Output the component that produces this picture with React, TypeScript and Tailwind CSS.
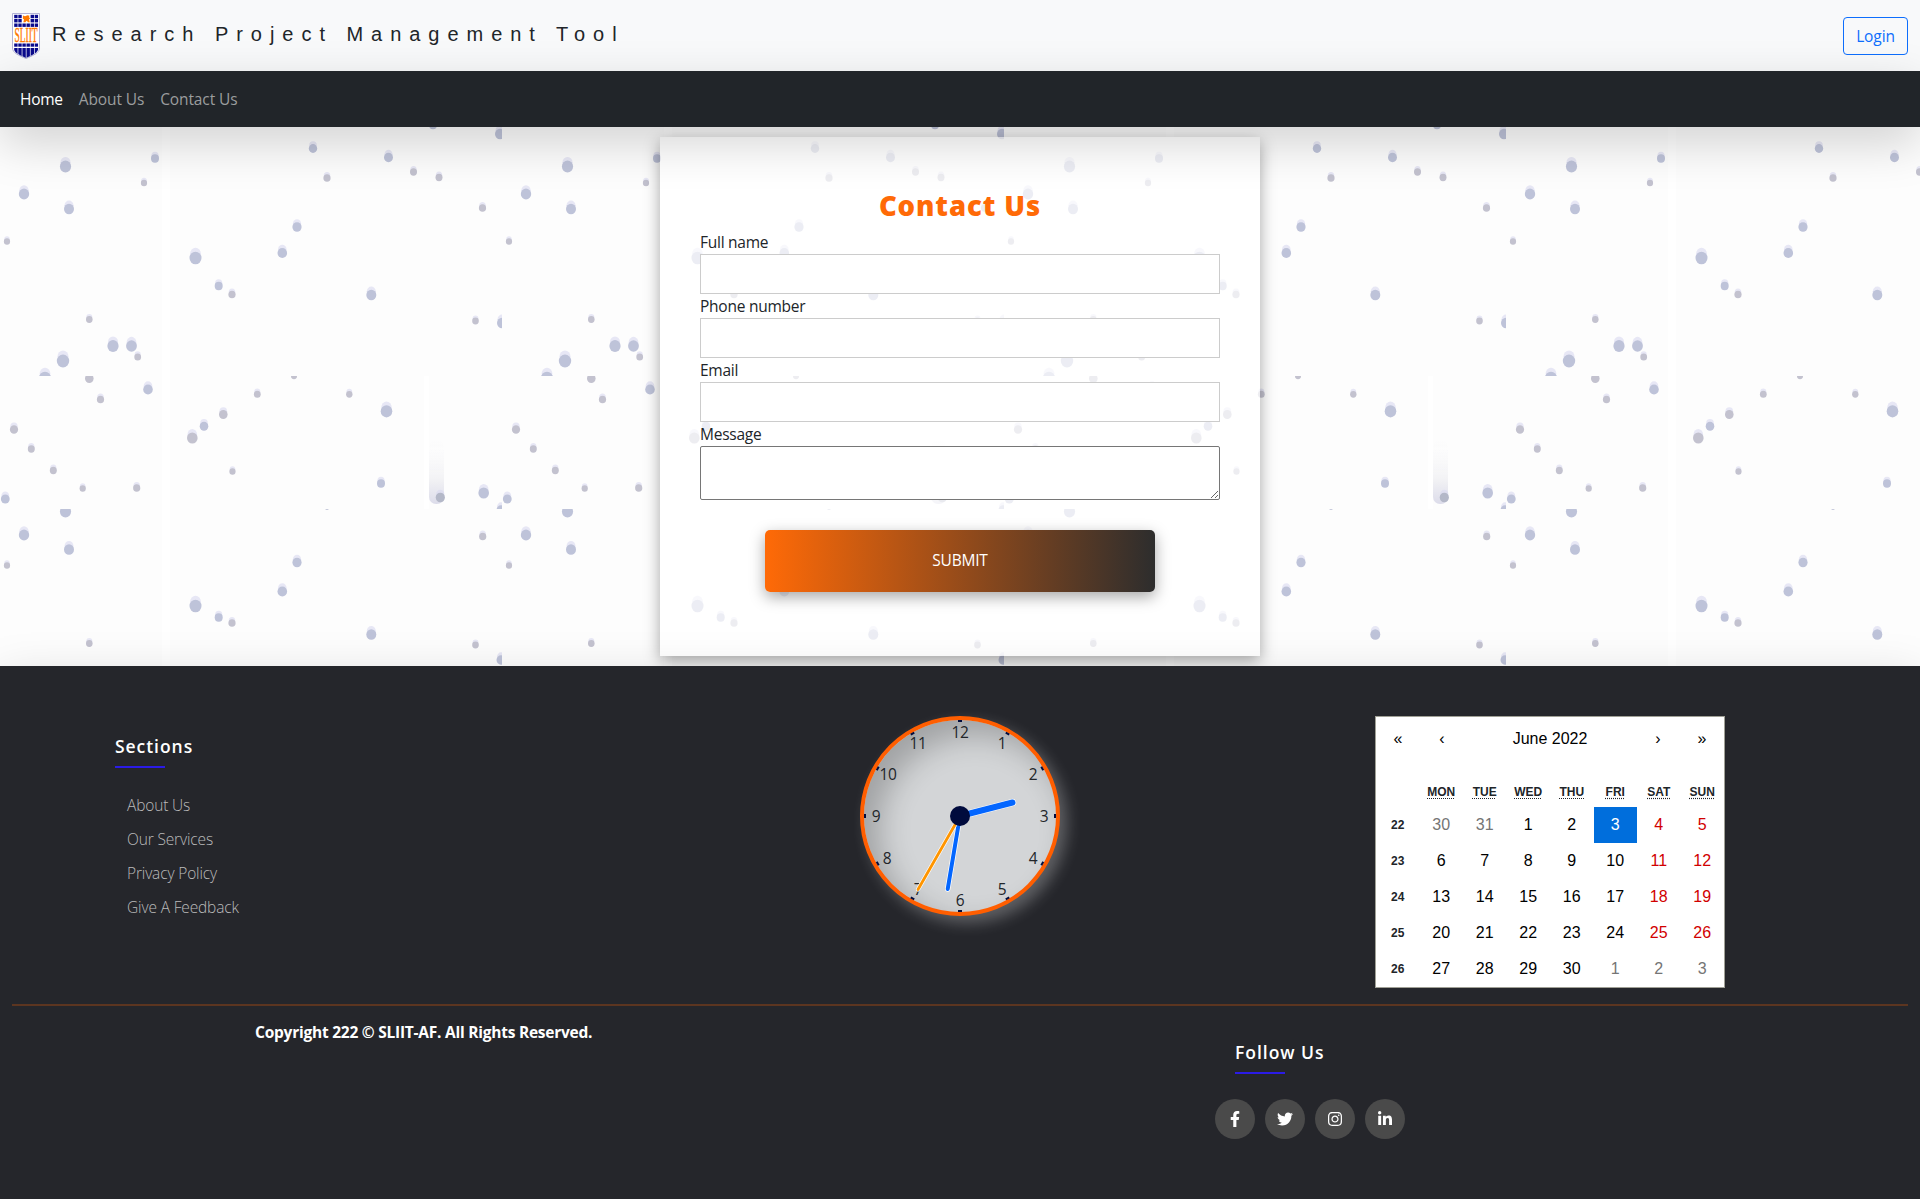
import React from "react";
import { FaFacebookF, FaTwitter, FaInstagram, FaLinkedinIn } from "react-icons/fa";

/* Droplets of one wallpaper tile: x, y, radius, tint. Coordinates are relative to the strip. */
type Drop = [number, number, number, string];
const B = "#bec3d9";
const G = "#c3c2cf";

const rowA: Drop[] = [
  [65.5, 39.5, 5.6, B], [155, 31.5, 4, B], [144, 56, 3.1, G], [24, 67, 5.2, B], [69, 82, 5, B],
  [7, 114.5, 3.1, G], [313, 21.5, 4.2, B], [327, 51, 3.6, G], [388.5, 30.5, 4.5, B], [413.5, 45, 3.5, G],
  [439, 50.5, 3.5, G], [482.5, 81, 3.6, G], [500, 7, 5, B], [433, -2, 4, B], [297, 100, 4.6, B],
  [282.3, 126, 4.8, B], [195.5, 131, 6, B], [218.7, 159, 4, B], [232, 167.5, 3.6, G], [371.3, 168, 5, B],
  [89.3, 192.5, 3.3, G], [113, 219, 5.6, B], [131.5, 219, 5.4, B], [137.7, 230, 3.4, G], [63, 234, 6.2, B],
  [45, 251, 6, B], [475.5, 194, 3.3, G], [502, 196, 5, B],
];
const rowB: Drop[] = [
  [89.3, 2.5, 4.3, G], [100.5, 23.5, 3.6, G], [148, 13.5, 4.8, B], [257.3, 18.3, 3.4, G], [294, 0, 3, G],
  [349.3, 18.3, 3.2, G], [223.3, 38.5, 4.3, G], [204, 50.3, 4.3, B], [192.3, 62, 5.3, G], [386.5, 35.3, 5.8, B],
  [14, 53.5, 4.1, G], [31.3, 73, 3.5, G], [53.3, 94.5, 3.5, G], [82.7, 112.5, 3.1, G], [136.7, 112, 3.6, G],
  [232.5, 95.5, 3.1, G], [381, 107.5, 4, B], [5.3, 123, 4.4, B], [483.7, 117, 5.3, B], [501, 134, 4.5, B],
  [440.3, 121.5, 4.6, "#b4b8c8"],
];
const rowC: Drop[] = [
  [65.5, 2.5, 5.6, B], [24, 26, 5.2, B], [69, 40.5, 5, B], [7, 56.5, 3.1, G], [297, 53.5, 4.6, B],
  [282.3, 82.5, 4.8, B], [195.5, 97, 6, B], [218.7, 108.5, 4, B], [232, 114, 3.6, G], [371.3, 125.5, 5, B],
  [482.7, 27.5, 3.6, G], [475.5, 136, 3.3, G], [89.3, 134.5, 3.3, G], [501, 151, 4.5, B], [327, -1, 2, B],
];

function Strip({ y, h, drops, trail }: { y: number; h: number; drops: Drop[]; trail?: boolean }) {
  return (
    <svg x="0" y={y} width="502" height={h} overflow="hidden">
      <rect x="162" width="8" height={h} fill="#fff" />
      {trail && <rect x="424" width="5" height={h} fill="#fff" />}
      {trail && <rect x="429" y="64" width="15" height="64" rx="7" fill="url(#trail)" filter="url(#soft)" />}
      {drops.map(([cx, cy, r, c], i) => (
        <g key={i} filter="url(#soft)">
          <ellipse cx={cx} cy={cy - r * 0.7} rx={r * 0.9} ry={r} fill="#d9d9f0" opacity="0.6" />
          <ellipse cx={cx} cy={cy} rx={r} ry={r * 1.05} fill={c} />
        </g>
      ))}
    </svg>
  );
}

function Wallpaper() {
  return (
    <svg className="absolute inset-0 h-full w-full" aria-hidden="true">
      <defs>
        <filter id="soft" x="-30%" y="-30%" width="160%" height="160%">
          <feGaussianBlur stdDeviation="0.6" />
        </filter>
        <linearGradient id="trail" x1="0" y1="0" x2="0" y2="1">
          <stop offset="0" stopColor="#f9f9fb" stopOpacity="0" />
          <stop offset="0.6" stopColor="#f3f3f5" />
          <stop offset="1" stopColor="#dcdcea" />
        </linearGradient>
        <pattern id="drops" width="502" height="539" patternUnits="userSpaceOnUse">
          <rect width="502" height="539" fill="#fdfdfd" />
          <Strip y={0} h={249} drops={rowA} />
          <Strip y={249} h={133} drops={rowB} trail />
          <Strip y={382} h={157} drops={rowC} />
        </pattern>
      </defs>
      <rect width="100%" height="100%" fill="url(#drops)" />
    </svg>
  );
}

function Crest() {
  const xs = [2.2, 6.3, 10.4, 14.5, 18.6, 22.7];
  return (
    <svg width="28" height="46" viewBox="0 0 28 46" className="block">
      <defs>
        <clipPath id="shield">
          <path d="M1.500 1H26.500V35C26.500 39 21 42 14 45C7 42 1.500 39 1.500 35Z" />
        </clipPath>
      </defs>
      <path d="M.5.500H27.500V35C27.500 40 21 42.500 14 45.500C7 42.500.5 40 .5 35Z" fill="#fff" stroke="#b3b3d6" />
      <g clipPath="url(#shield)" fill="#0a0a8c">
        {xs.map((x, i) => (
          <g key={i}>
            {[1.8, 6, 10.5].map((y, j) =>
              j < 2 && (i === 2 || i === 3) ? null : <rect key={y} x={x} y={y} width="3.400" height="3.400" />
            )}
            <rect x={x} y="30.500" width="3.400" height="3.200" />
            <rect x={x} y="35" width="3.400" height="10" />
          </g>
        ))}
      </g>
      <path d="M11 2.500l2 .8 2.500-1 2 .5-.5 1.500 1.200 1-1.200 1.200.8 2.700h-1.800l-1.200-1.500-1.500 1.500H11.300l.7-2.700-1.200-1z" fill="#ff7a00" />
      <g transform="translate(14 29) scale(1 2.300)">
        <text textAnchor="middle" fontFamily="Liberation Serif, serif" fontSize="9.500" fill="#ff7a00" stroke="#ff7a00" strokeWidth="0.200">
          SLIIT
        </text>
      </g>
    </svg>
  );
}

function Field({ label }: { label: string }) {
  return (
    <label className="block">
      <span className="block h-6 text-[15.5px] leading-6 tracking-[-0.25px]">{label}</span>
      <input className="block h-10 w-full border border-[#ccc] bg-white px-2" />
    </label>
  );
}

const numerals = [
  [12, 0, -84], [1, 42, -73], [2, 73, -41.5], [3, 84, 0.5], [4, 73, 42.5], [5, 42, 73.5],
  [6, 0, 84.5], [7, -42, 73.5], [8, -73, 42.5], [9, -84, 0.5], [10, -72, -41.5], [11, -42, -72.5],
];

function Clock() {
  return (
    <div className="h-[200px] w-[200px] rounded-full border-4 border-[#ff5e00] bg-[#d3d5d7] shadow-[7px_7px_15px_rgba(255,255,255,0.27),inset_15px_15px_30px_rgba(0,0,0,0.24)]">
      <svg viewBox="-96 -96 192 192" className="block h-full w-full">
        {numerals.map(([n], i) => (
          <rect key={n} x="-2" y="-96" width="4" height="2" fill="#000b3d" transform={`rotate(${i * 30})`} />
        ))}
        {numerals.map(([n, x, y]) => (
          <text key={n} x={x} y={y + 5.5} textAnchor="middle" fontFamily="Open Sans, sans-serif" fontSize="15.500" letterSpacing="-0.300" fill="#212529">
            {n}
          </text>
        ))}
        <g strokeLinecap="round">
          <path d="M0 0L52.500 -13.500" stroke="#fff" strokeWidth="7.400" />
          <path d="M0 0L52.500 -13.500" stroke="#0366ff" strokeWidth="6" />
          <path d="M0 0L-12.300 73" stroke="#fff" strokeWidth="5.400" />
          <path d="M0 0L-12.300 73" stroke="#0366ff" strokeWidth="4" />
          <path d="M0 0L-42 73.500" stroke="#fff" strokeWidth="4.200" />
          <path d="M0 0L-42 73.500" stroke="#ff9500" strokeWidth="2.800" />
        </g>
        <circle r="10" fill="#000b3d" />
      </svg>
    </div>
  );
}

const weeks: [number, number[]][] = [
  [22, [30, 31, 1, 2, 3, 4, 5]],
  [23, [6, 7, 8, 9, 10, 11, 12]],
  [24, [13, 14, 15, 16, 17, 18, 19]],
  [25, [20, 21, 22, 23, 24, 25, 26]],
  [26, [27, 28, 29, 30, 1, 2, 3]],
];

function dayStyle(w: number, d: number, i: number) {
  if (w === 0 && d === 3) return "bg-[#006edc] text-white";
  if ((w === 0 && d > 20) || (w === 4 && d < 10)) return "text-[#757575]";
  return i > 4 ? "text-[#d10000]" : "text-black";
}

function Calendar() {
  return (
    <div className="h-[272px] w-[350px] border border-[#a0a096] bg-white font-['Liberation_Sans',Arial,sans-serif] text-black">
      <div className="mb-4 flex h-11 items-center text-center text-base">
        <span className="w-11">«</span>
        <span className="w-11">‹</span>
        <span className="flex-1">June 2022</span>
        <span className="w-11">›</span>
        <span className="w-11">»</span>
      </div>
      <div className="grid h-[30px] grid-cols-8 items-center text-center text-xs font-bold text-[#212529]">
        <span />
        {["MON", "TUE", "WED", "THU", "FRI", "SAT", "SUN"].map((d) => (
          <span key={d}>
            <span className="underline decoration-dotted underline-offset-2">{d}</span>
          </span>
        ))}
      </div>
      {weeks.map(([no, days], w) => (
        <div key={no} className="grid h-9 grid-cols-8 text-center text-base leading-9">
          <span className="text-xs leading-9 font-bold text-[#212529]">{no}</span>
          {days.map((d, i) => (
            <span key={i} className={dayStyle(w, d, i)}>{d}</span>
          ))}
        </div>
      ))}
    </div>
  );
}

export default function App() {
  return (
    <div className="flex h-[1199px] w-[1920px] flex-col overflow-hidden bg-white font-['Open_Sans','Segoe_UI',sans-serif] text-[#212529]">
      <header className="flex h-[71px] shrink-0 items-center bg-[#f8f9fa] px-3">
        <Crest />
        <h1 className="ml-3 pb-1 font-['Liberation_Sans',Arial,sans-serif] text-xl tracking-[7.97px] whitespace-nowrap">
          Research Project Management Tool
        </h1>
        <button className="ml-auto h-[38px] w-[65px] rounded-[4px] border border-[#0d6efd] pt-0.5 text-[15.5px] tracking-[-0.1px] text-[#0d6efd]">
          Login
        </button>
      </header>

      <nav className="relative z-10 flex h-14 shrink-0 items-center gap-4 bg-[#212529] px-5 pt-0.5 text-[15.5px] tracking-[-0.12px] shadow-[0_16px_48px_rgba(0,0,0,0.175)]">
        <a className="tracking-[-0.25px] text-white">Home</a>
        <a className="text-[#9b9d9e]">About Us</a>
        <a className="text-[#9b9d9e]">Contact Us</a>
      </nav>

      <main className="relative flex h-[539px] shrink-0 justify-center py-[10px]">
        <Wallpaper />
        <form className="relative flex h-[519px] w-[600px] flex-col bg-white/70 px-10 pt-[51px] shadow-[0_5px_15px_rgba(0,0,0,0.35)]">
          <h2 className="h-[42px] text-center text-[27.5px] leading-9 font-extrabold tracking-[0.9px] text-[#ff6a07]">
            Contact Us
          </h2>
          <Field label="Full name" />
          <Field label="Phone number" />
          <Field label="Email" />
          <label className="block">
            <span className="block h-6 text-[15.5px] leading-6 tracking-[-0.25px]">Message</span>
            <textarea className="block h-[54px] w-full resize rounded-[2px] border border-[#767676] bg-white" />
          </label>
          <button className="mt-[30px] h-[62px] w-[390px] self-center rounded-[5px] bg-linear-to-r/srgb from-[#ff6a07] to-[#2d2d2d] text-[15.5px] tracking-[-0.2px] text-white shadow-[0_5px_15px_rgba(0,0,0,0.35)]">
            SUBMIT
          </button>
        </form>
      </main>

      <footer className="relative flex-1 bg-[#25262b] px-3 shadow-[0_16px_48px_rgba(0,0,0,0.175)]">
        <div className="flex h-[338px] items-start pt-[50px]">
          <div className="ml-[103px] w-[745px] pt-[15px]">
            <h3 className="w-[50px] border-b-2 border-[#2b1be6] pb-[5px] text-[17.500px] leading-[30px] font-semibold tracking-[0.95px] whitespace-nowrap text-white">
              Sections
            </h3>
            <ul className="mt-5 ml-3 text-[15.500px] leading-[34px] font-light tracking-[-0.15px] text-[#bbb]">
              <li>About Us</li>
              <li>Our Services</li>
              <li>Privacy Policy</li>
              <li>Give A Feedback</li>
            </ul>
          </div>
          <Clock />
          <div className="ml-[315px]">
            <Calendar />
          </div>
        </div>
        <div className="h-0.5 bg-[#5c3520]" />
        <div className="flex">
          <p className="ml-[243px] w-[960px] pt-[14px] text-[15.500px] leading-6 font-bold tracking-[-0.24px] text-white">
            Copyright 222 © SLIIT-AF. All Rights Reserved.
          </p>
          <div className="pt-[31px]">
            <h3 className="ml-5 w-[50px] border-b-2 border-[#2b1be6] pb-[5px] text-[17.500px] leading-[30px] font-semibold tracking-[0.98px] whitespace-nowrap text-white">
              Follow Us
            </h3>
            <div className="mt-[25px] flex gap-[10px]">
              {[FaFacebookF, FaTwitter, FaInstagram, FaLinkedinIn].map((Icon, i) => (
                <a key={i} className="flex h-10 w-10 items-center justify-center rounded-full bg-[#4a4a4a] text-base text-white">
                  <Icon />
                </a>
              ))}
            </div>
          </div>
        </div>
      </footer>
    </div>
  );
}
